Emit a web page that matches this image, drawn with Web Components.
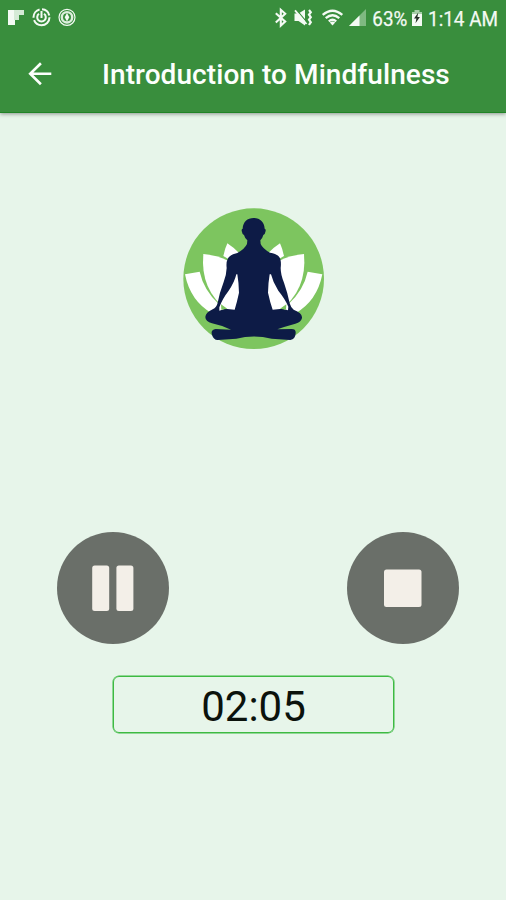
<!DOCTYPE html>
<html lang="en">
<head>
<meta charset="utf-8">
<title>Introduction to Mindfulness</title>
<style>
	html, body { margin: 0; height: 100%; }
	body {
		font-family: Roboto, "Liberation Sans", sans-serif;
		background: #e7f5ea;
		overflow: hidden;
	}
</style>
</head>
<body>
<session-player>
	<status-bar slot="header" battery="63%" time="1:14 AM"></status-bar>
	<app-bar slot="header">Introduction to Mindfulness</app-bar>
	<lotus-logo slot="logo"></lotus-logo>
	<round-button slot="controls" icon="pause"></round-button>
	<round-button slot="controls" icon="stop"></round-button>
	<session-timer slot="timer">02:05</session-timer>
</session-player>

<script>
'use strict';

class BaseElement extends HTMLElement {
	constructor() {
		super();
		this.shadow = this.attachShadow({ mode: 'open' });
	}

	connectedCallback() {
		const container = document.createElement('template');
		container.innerHTML = this.render();
		this.shadow.replaceChildren(container.content.cloneNode(true));
	}
}

class SessionPlayer extends BaseElement {
	render() {
		return `
			<style>
				:host { display: flex; flex-direction: column; height: 900px; width: 506px; }
				header {
					background: #398e3d;
					height: 112px;
					flex: none;
					box-shadow: 0 1px 4px rgba(0, 0, 0, .4);
					border-bottom: 1px solid #208426;
				}
				main { display: flex; flex-direction: column; align-items: center; padding-top: 95px; }
				.controls {
					display: flex;
					justify-content: space-between;
					width: 402px;
					margin: 182.5px 0 31.5px;
					padding-left: 9px;
				}
			</style>
			<header><slot name="header"></slot></header>
			<main>
				<slot name="logo"></slot>
				<div class="controls"><slot name="controls"></slot></div>
				<slot name="timer"></slot>
			</main>
		`;
	}
}

class StatusBar extends BaseElement {
	render() {
		return `
			<style>
				:host { display: block; height: 36px; }
				svg { display: block; }
				text { font-size: 21px; fill: #f4faf4; stroke: #f4faf4; stroke-width: .25px; }
			</style>
			<svg width="506" height="36" viewBox="0 0 506 36" fill="#f4faf4">
				<!-- notifications -->
				<path d="M8 10h7v15H8z"/>
				<path d="M14 10h10v5H14zM14 15h5v5h-5z" fill="#d5ead6"/>
				<g fill="none" stroke="#f4faf4">
					<circle cx="41.5" cy="17.3" r="8" stroke-width="2" stroke-dasharray="22 2.5 11 2.5 10 2.3"/>
					<path d="M39 13.8a4.3 4.3 0 1 0 5 0M41.5 11v7" stroke-width="2"/>
					<circle cx="67" cy="17.3" r="8" stroke-width="1.2"/>
					<circle cx="67" cy="17.3" r="5.2" stroke-width="2.4" stroke="#dceedd"/>
				</g>
				<path d="M67 13l2.3 4.3L67 21.5l-2.3-4.2z"/>
				<!-- bluetooth -->
				<path d="M275.8 13.2l9.4 8.4-4.4 4V9.8l4.4 4-9.4 8.6" fill="none" stroke="#f4faf4" stroke-width="2.1"/>
				<!-- vibrate / muted -->
				<path d="M294.5 13.5h4l6.5-4v16l-6.5-4.5h-4z"/>
				<path d="M296.5 9.8l10.5 12.6" stroke="#398e3d" stroke-width="1.2"/>
				<path d="M295 10.3l11.5 13.7" stroke="#f4faf4" stroke-width="1.8"/>
				<path d="M309 10l1.8 2.2-1.8 2.5 1.8 2.5-1.8 2.5 1.8 2.5-1.8 2.8" fill="none" stroke="#f4faf4" stroke-width="2.2"/>
				<!-- wifi -->
				<g fill="none" stroke="#f4faf4" stroke-width="2.3">
					<path d="M322.7 14.9q9.8-8.4 19.6 0"/>
					<path d="M325.7 18.2q6.8-5.8 13.6 0"/>
					<path d="M328.8 21.4q3.7-3.2 7.4 0"/>
				</g>
				<path d="M329.8 22.4q2.7-1.8 5.4 0l-2.7 3z"/>
				<!-- signal -->
				<path d="M366 9v17h-17z" fill="#7fb981"/>
				<path d="M359.5 15.5V26H349z"/>
				<text x="372.3" y="25.5" textLength="35" lengthAdjust="spacingAndGlyphs">${this.getAttribute('battery')}</text>
				<!-- battery -->
				<path d="M412 12h2.5v-2h5v2h2.5v7h-10z" fill="#a8cfa9"/>
				<path d="M412 14h10v12h-10z"/>
				<path d="M418.3 12.5l-4.3 6h2.4l-.9 4.8 4.4-6.2h-2.5z" fill="#252f26"/>
				<text x="428" y="25.5" textLength="70" lengthAdjust="spacingAndGlyphs">${this.getAttribute('time')}</text>
			</svg>
		`;
	}
}

class AppBar extends BaseElement {
	render() {
		return `
			<style>
				:host { display: flex; align-items: center; height: 76px; padding-left: 27px; }
				svg { flex: none; margin-right: 49px; }
				h1 {
					margin: 0;
					padding-top: 2px;
					font-size: 28px;
					font-weight: 500;
					line-height: 36px;
					letter-spacing: .07px;
					color: #fcfffc;
					white-space: nowrap;
				}
			</style>
			<svg width="26" height="26" viewBox="0 0 26 26" fill="none" stroke="#fcfffc" stroke-width="2.6">
				<path d="M24.3 12.7H3.2M13.9 2.3L3.2 12.7l10.7 10.5"/>
			</svg>
			<h1><slot></slot></h1>
		`;
	}
}

class LotusLogo extends BaseElement {
	render() {
		return `
			<style>
				:host { display: block; height: 141.5px; }
				svg { display: block; margin-left: 1px; }
			</style>
			<svg width="141.5" height="141.5" viewBox="24 24 424.5 424.5">
				<defs>
					<g id="petals">
						<path d="M157 130q20 13 36 30l-34 16-14-8q4-20 12-38z"/>
						<path d="M85 162q42 4 74 20l40 40v110h-40q-84-60-74-170z"/>
						<path d="M30 223l44-8Q86 270 132 313L112 341Q46 304 30 223z"/>
					</g>
				</defs>
				<circle cx="236" cy="236" r="211" fill="#7dc55f"/>
				<use href="#petals" fill="#fff"/>
				<use href="#petals" fill="#fff" transform="matrix(-1 0 0 1 472 0)"/>
				<!-- seated figure -->
				<path fill="#0d1b46" d="M236 54
					C255 54 268 66 269 86 Q274 88 271 96 Q270 104 265 105 Q262 116 256 121 L257 132
					Q263 146 285 158 Q313 163 316 178 Q319 189 317 204 Q317 224 327 248 Q338 279 344 310
					Q347 322 356 329 Q383 339 381 354 Q379 366 361 371 Q331 379 307 388
					L350 387 Q363 387 362 399 Q361 418 346 420 L290 416 Q236 403 184 416 L128 420
					Q115 419 111 404 Q106 389 122 387 L168 389 Q143 377 111 370 Q91 364 91 351
					Q92 338 113 328 Q125 322 128 308 Q133 280 146 246 Q154 227 155 204
					Q153 187 158 177 Q163 164 187 159 Q209 147 216 132 L217 121
					Q210 116 207 105 Q202 104 201 96 Q198 88 203 86 C204 66 217 54 236 54Z"/>
				<path fill="#fff" d="M184 223Q178 248 161 272Q141 298 133 322L133 332L150 326L179 329Q186 306 192 278Q191 246 187 223z
					M288 223Q294 248 310 272Q331 298 340 320L339 331L322 326L293 329Q285 306 279 278Q280 246 284 223z"/>
				<path fill="#7dc55f" d="M138 313l19 13-18 3zM334 313l-19 13 18 3z"/>
			</svg>
		`;
	}
}

class RoundButton extends BaseElement {
	render() {
		const icons = {
			pause: '<rect x="35.2" y="33.5" width="17" height="45.5" rx="2.5"/><rect x="59.4" y="33.5" width="17" height="45.5" rx="2.5"/>',
			stop: '<rect x="37" y="37.5" width="37.5" height="37.5" rx="2.5"/>'
		};
		return `
			<style>
				:host { display: block; width: 112px; height: 112px; }
				button { display: block; padding: 0; border: 0; border-radius: 50%; background: #6a6f69; }
				svg { display: block; }
			</style>
			<button><svg width="112" height="112" fill="#f3efe8">${icons[this.getAttribute('icon')]}</svg></button>
		`;
	}
}

class SessionTimer extends BaseElement {
	render() {
		return `
			<style>
				:host {
					display: block;
					box-sizing: border-box;
					width: 281px;
					height: 57px;
					margin-left: 1px;
					border: 1px solid #3dba42;
					box-shadow: 0 0 0 .5px #3dba42;
					border-radius: 6px;
					font-size: 42px;
					line-height: 60px;
					text-align: center;
					color: #0b120c;
				}
			</style>
			<slot></slot>
		`;
	}
}

customElements.define('session-player', SessionPlayer);
customElements.define('status-bar', StatusBar);
customElements.define('app-bar', AppBar);
customElements.define('lotus-logo', LotusLogo);
customElements.define('round-button', RoundButton);
customElements.define('session-timer', SessionTimer);
</script>
</body>
</html>
